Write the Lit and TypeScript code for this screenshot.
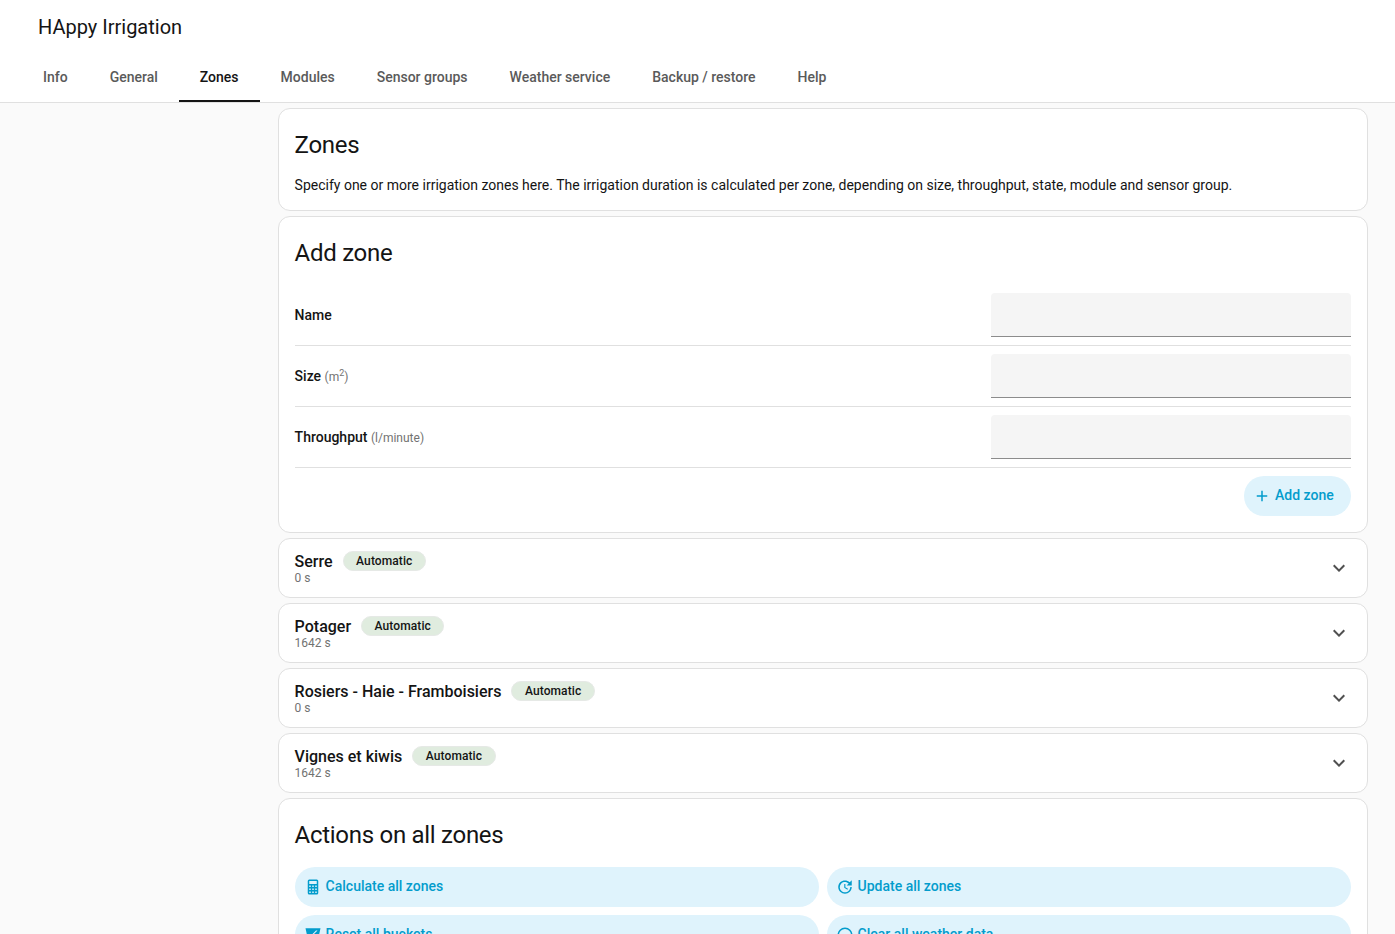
import { LitElement, html, css, svg } from "lit";
import { customElement } from "lit/decorators.js";

const ICONS = {
  plus: "M19,13H13V19H11V13H5V11H11V5H13V11H19V13Z",
  chevron: "M7.41,8.58L12,13.17L16.59,8.58L18,10L12,16L6,10L7.41,8.58Z",
  calc: "M7,2H17A2,2 0 0,1 19,4V20A2,2 0 0,1 17,22H7A2,2 0 0,1 5,20V4A2,2 0 0,1 7,2M7,4V8H17V4H7M7,10V12H9V10H7M11,10V12H13V10H11M15,10V12H17V10H15M7,14V16H9V14H7M11,14V16H13V14H11M15,14V16H17V14H15M7,18V20H9V18H7M11,18V20H13V18H11M15,18V20H17V18H15Z",
  update: "M21,10.12H14.22L16.96,7.3C14.23,4.6 9.81,4.5 7.08,7.2C4.35,9.91 4.35,14.28 7.08,17C9.81,19.7 14.23,19.7 16.96,17C18.32,15.65 19,14.08 19,12.1H21C21,14.08 20.12,16.65 18.36,18.39C14.85,21.87 9.15,21.87 5.64,18.39C2.14,14.92 2.11,9.28 5.62,5.81C9.13,2.34 14.76,2.34 18.27,5.81L21,3V10.12M12.5,8V12.25L16,14.33L15.28,15.54L11,13V8H12.5Z",
  bucket: "M2,3H22L20,12H19L12,12L18,6H16L9,13L4,12L2,3Z M7,16H9L6,20H4Z",
  clear: "M12,2A10,10 0 0,1 22,12A10,10 0 0,1 12,22A10,10 0 0,1 2,12A10,10 0 0,1 12,2M12,4A8,8 0 0,0 4,12A8,8 0 0,0 12,20A8,8 0 0,0 20,12A8,8 0 0,0 12,4Z",
};

const icon = (d: string, cls = "") =>
  html`<svg class=${cls} viewBox="0 0 24 24" fill="currentColor">${svg`<path d=${d}></path>`}</svg>`;

const TABS = ["Info", "General", "Zones", "Modules", "Sensor groups", "Weather service", "Backup / restore", "Help"];
const ZONES = [
  ["Serre", "0 s"],
  ["Potager", "1642 s"],
  ["Rosiers - Haie - Framboisiers", "0 s"],
  ["Vignes et kiwis", "1642 s"],
];

@customElement("app-root")
export class AppRoot extends LitElement {
  static styles = css`
    :host {
      display: block;
      height: 934px;
      overflow: hidden;
      background: #fafafa;
      font-family: Roboto, "Liberation Sans", sans-serif;
      color: #141414;
    }
    header {
      height: 103px;
      box-sizing: border-box;
      background: #fff;
      border-bottom: 1px solid #e0e0e0;
      display: flex;
      flex-direction: column;
    }
    .title {
      font-size: 20px;
      line-height: 28px;
      padding: 13px 0 0 38px;
      height: 39px;
    }
    .tabs {
      display: flex;
      padding-left: 22px;
      margin-top: 2px;
    }
    .tab {
      height: 48px;
      box-sizing: border-box;
      padding: 0 21px;
      font-size: 14px;
      font-weight: 500;
      color: #5a5a5a;
      display: flex;
      align-items: center;
      border-bottom: 2px solid transparent;
    }
    .tab.on {
      color: #141414;
      border-bottom-color: #141414;
    }
    main {
      width: 1090px;
      margin: 5px 0 0 278px;
      display: flex;
      flex-direction: column;
      gap: 5px;
    }
    .card {
      background: #fff;
      border: 1px solid #e0e0e0;
      border-radius: 12px;
      box-sizing: border-box;
      padding: 0 16px;
    }
    h2 {
      margin: 0 0 0 -0.4px;
      font-size: 24px;
      font-weight: 400;
      line-height: 32px;
      letter-spacing: -0.012em;
    }
    .intro { height: 103px; padding-top: 20px; }
    .intro p {
      margin: 14px 0 0 -0.4px;
      font-size: 14px;
      line-height: 20px;
    }
    .add { height: 317px; padding-top: 20px; }
    .rows { margin-top: 24px; }
    .row {
      height: 53px;
      margin-bottom: 8px;
      display: flex;
      align-items: flex-start;
      justify-content: space-between;
      border-bottom: 1px solid #e0e0e0;
      box-sizing: border-box;
    }
    .label {
      font-size: 14px;
      font-weight: 500;
      line-height: 20px;
      margin: 12px 0 0 -0.4px;
    }
    .unit {
      font-size: 12px;
      font-weight: 400;
      color: #727272;
    }
    .unit sup { font-size: 9px; line-height: 0; }
    .input {
      width: 360px;
      height: 44px;
      background: #f5f5f5;
      border-bottom: 1px solid #8c8c8c;
      border-radius: 4px 4px 0 0;
      box-sizing: border-box;
    }
    .add-foot {
      display: flex;
      justify-content: flex-end;
    }
    .btn {
      height: 40px;
      border-radius: 20px;
      background: #dff3fc;
      color: #039ccc;
      font-size: 14px;
      font-weight: 500;
      display: flex;
      align-items: center;
      box-sizing: border-box;
    }
    .btn svg { width: 18px; height: 18px; flex: none; }
    .btn span { position: relative; top: -1px; }
    .add-btn { width: 107px; padding: 0 0 0 9px; gap: 4px; }
    .zone {
      height: 60px;
      display: flex;
      align-items: flex-start;
      justify-content: space-between;
    }
    .zhead {
      display: flex;
      align-items: center;
      margin: 11px 0 0 -0.4px;
      height: 22px;
    }
    .zname { font-size: 16px; font-weight: 500; line-height: 22px; position: relative; top: 1px; }
    .chip {
      margin-left: 10px;
      height: 20px;
      padding: 0 12.5px;
      border-radius: 10px;
      background: #e0ecdf;
      border: 1px solid #e6e9e6;
      box-sizing: border-box;
      font-size: 12px;
      font-weight: 500;
      line-height: 18px;
      letter-spacing: 0.1px;
      display: flex;
      align-items: center;
    }
    .ztime { font-size: 12px; line-height: 14px; color: #727272; margin: -1px 0 0 -0.4px; }
    .chev { width: 24px; height: 24px; color: #505050; margin-top: 17px; }
    .actions { padding-top: 20px; height: 300px; }
    .grid {
      display: grid;
      grid-template-columns: 1fr 1fr;
      gap: 8px;
      margin-top: 16px;
    }
    .act { padding-left: 9px; gap: 3.6px; }
  `;

  render() {
    return html`
      <header>
        <div class="title">HAppy Irrigation</div>
        <nav class="tabs">
          ${TABS.map((t) => html`<div class="tab ${t === "Zones" ? "on" : ""}">${t}</div>`)}
        </nav>
      </header>
      <main>
        <section class="card intro">
          <h2>Zones</h2>
          <p>Specify one or more irrigation zones here. The irrigation duration is calculated per zone, depending on size, throughput, state, module and sensor group.</p>
        </section>
        <section class="card add">
          <h2>Add zone</h2>
          <div class="rows">
            <div class="row"><div class="label">Name</div><div class="input"></div></div>
            <div class="row"><div class="label">Size <span class="unit">(m<sup>2</sup>)</span></div><div class="input"></div></div>
            <div class="row"><div class="label">Throughput <span class="unit">(l/minute)</span></div><div class="input"></div></div>
          </div>
          <div class="add-foot">
            <div class="btn add-btn">${icon(ICONS.plus)}<span>Add zone</span></div>
          </div>
        </section>
        ${ZONES.map(
          ([n, t]) => html`
            <section class="card zone">
              <div>
                <div class="zhead"><span class="zname">${n}</span><span class="chip">Automatic</span></div>
                <div class="ztime">${t}</div>
              </div>
              ${icon(ICONS.chevron, "chev")}
            </section>
          `
        )}
        <section class="card actions">
          <h2>Actions on all zones</h2>
          <div class="grid">
            <div class="btn act">${icon(ICONS.calc)}<span>Calculate all zones</span></div>
            <div class="btn act">${icon(ICONS.update)}<span>Update all zones</span></div>
            <div class="btn act">${icon(ICONS.bucket)}<span>Reset all buckets</span></div>
            <div class="btn act">${icon(ICONS.clear)}<span>Clear all weather data</span></div>
          </div>
        </section>
      </main>
    `;
  }
}
